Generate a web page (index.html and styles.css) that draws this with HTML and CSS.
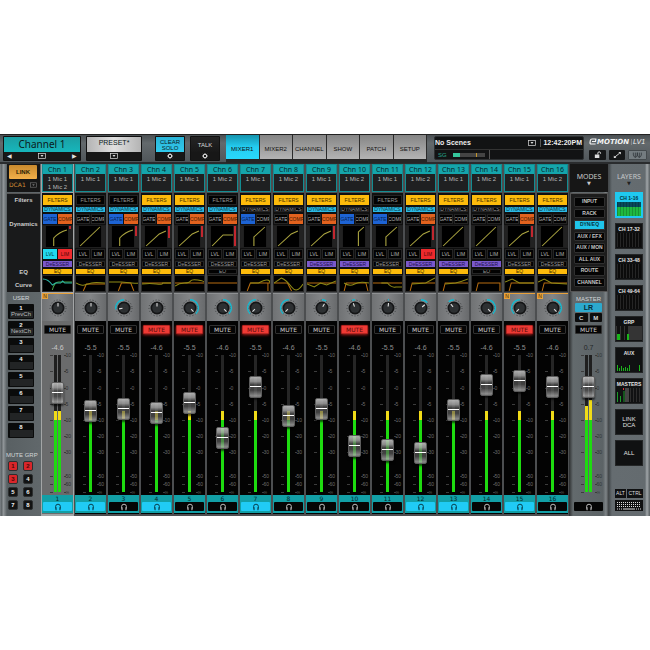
FILE: index.html
```html
<!DOCTYPE html>
<html lang="en">
<head>
<meta charset="utf-8">
<title>eMotion LV1 – Mixer</title>
<link rel="stylesheet" href="styles.css">
</head>
<body>
<svg class="defs" aria-hidden="true">
  <symbol id="i-phones" viewBox="0 0 10 8"><path d="M2.6 4.6V3.6a2.4 2.4 0 0 1 4.8 0v1" fill="none" stroke="currentColor" stroke-width="1"/><path d="M2 4.2h1.6v3H2.6zM6.4 4.2H8l-.6 3h-1z" fill="currentColor"/></symbol>
  <symbol id="i-gear" viewBox="0 0 8 8"><circle cx="4" cy="4" r="1.7" fill="none" stroke="currentColor" stroke-width="1"/><path d="M4 1V2M4 6V7M1 4H2M6 4H7M1.9 1.9l.7.7M5.4 5.4l.7.7M6.1 1.9l-.7.7M2.6 5.4l-.7.7" stroke="currentColor" stroke-width=".8"/></symbol>
  <symbol id="i-drop" viewBox="0 0 8 6"><rect x=".5" y=".5" width="7" height="5" fill="none" stroke="currentColor" stroke-width=".7"/><path d="M2.5 2h3L4 4z" fill="currentColor"/></symbol>
</svg>
<main class="console">
  <header class="top">
    <div class="picker picker-channel">
      <button class="face">Channel 1</button>
      <div class="under"><button aria-label="Previous channel">◀</button><button aria-label="Choose channel"><svg class="drop"><use href="#i-drop"/></svg></button><button aria-label="Next channel">▶</button></div>
    </div>
    <div class="picker picker-preset">
      <button class="face">PRESET*</button>
      <div class="under under-mid"><button aria-label="Choose preset"><svg class="drop"><use href="#i-drop"/></svg></button></div>
    </div>
    <div class="picker picker-small picker-solo">
      <button class="face">CLEAR<br>SOLO</button>
      <div class="under under-mid"><button aria-label="Solo settings"><svg class="gear"><use href="#i-gear"/></svg></button></div>
    </div>
    <div class="picker picker-small picker-talk">
      <button class="face">TALK</button>
      <div class="under under-mid"><button aria-label="Talk settings"><svg class="gear"><use href="#i-gear"/></svg></button></div>
    </div>
    <nav class="tabs">
      <button class="on">MIXER1</button><button>MIXER2</button><button>CHANNEL</button><button>SHOW</button><button>PATCH</button><button>SETUP</button>
    </nav>
    <section class="scenes">
      <div class="scene-row">
        <select aria-label="Scene"><option>No Scenes</option></select>
        <svg class="drop"><use href="#i-drop"/></svg>
        <time>12:42:20PM</time>
      </div>
      <div class="load-row"><span>SG</span><div class="load"><i></i><b></b></div><div class="load-rest"></div></div>
    </section>
    <section class="brand">
      <div class="logo"><svg viewBox="0 0 8 7"><path d="M7.4 1H3Q1.6 1 1.3 2.6L1 4.6Q.8 6 2.2 6H6.6M3 3.5H6.5L6.9 1" fill="none" stroke="#f2f2f2" stroke-width="1.2"/></svg><b>MOTION</b><span>LV1</span></div>
      <div class="tools">
        <button aria-label="Lock"><svg viewBox="0 0 16 10"><path d="M5.5 4.5h4.5v3.5H5.5z" fill="#ddd"/><path d="M8.5 4.5V3.2a1.3 1.3 0 0 1 2.7 0v.6" fill="none" stroke="#ddd"/></svg></button>
        <button aria-label="Resize"><svg viewBox="0 0 16 10"><path d="M5.5 7l5-4" stroke="#ccc"/><path d="M4.500 5.500v2.500h2.500zM11.500 4.500V2h-2.500z" fill="#ddd"/></svg></button>
        <button class="wave" aria-label="Waves"><svg viewBox="0 0 18 10"><path d="M4 2v3q1 3 2.500 3t2.500-3v-3v3q1 3 2.500 3t2.500-3v-3M6.500 2v6M11.500 2v6" fill="none" stroke="#30363a" stroke-width="1"/></svg></button>
      </div>
    </section>
  </header>
  <div class="desk">
    <aside class="left">
      <div class="link">
        <button>LINK</button>
        <div class="dca"><select aria-label="DCA"><option>DCA1</option></select><svg class="drop"><use href="#i-drop"/></svg></div>
      </div>
      <div class="labels"><span class="l-filters">Filters</span><span class="l-dyn">Dynamics</span><span class="l-eq">EQ</span><span class="l-curve">Curve</span></div>
      <div class="user">
        <h2>USER</h2>
        <button>1<span>PrevCh</span></button><button>2<span>NextCh</span></button><button>3<span></span></button><button>4<span></span></button><button>5<span></span></button><button>6<span></span></button><button>7<span></span></button><button>8<span></span></button>
      </div>
      <div class="groups">
        <h2>MUTE GRP</h2>
        <div><button class="on">1</button><button class="on">2</button><button class="on">3</button><button>4</button><button>5</button><button>6</button><button>7</button><button>8</button></div>
      </div>
    </aside>
    <div class="channels" id="channels"></div>
    <section class="master">
      <button class="modes-head">MODES<small>▼</small></button>
      <div class="modes">
        <button>INPUT</button><button>RACK</button><button class="on">DYN/EQ</button><button>AUX / EFX</button><button>AUX / MON</button><button>ALL AUX</button><button>ROUTE</button><button>CHANNEL</button>
      </div>
      <div class="master-head">
        <h2>MASTER</h2>
        <button class="lr">LR</button>
        <div><button>C</button><button>M</button></div>
      </div>
      <div id="master"></div>
    </section>
    <aside class="layers">
      <button class="layers-head">LAYERS<small>▼</small></button>
      <button class="layer on">CH 1-16<i class="bank"></i></button>
      <button class="layer">CH 17-32<i class="bank"></i></button>
      <button class="layer">CH 33-48<i class="bank"></i></button>
      <button class="layer">CH 49-64<i class="bank"></i></button>
      <button class="layer">GRP<svg viewBox="0 0 26 14"><path d="M0 0h26v14H0z" fill="#343434"/><path d="M1 0h3v14H1zM5 0h3v14H5zM9 0h3v14H9z" fill="#111"/><path d="M1 8h3v6H1zM11 8h2v6h-2z" fill="#1bb51b"/></svg></button>
      <button class="layer">AUX<svg viewBox="0 0 26 14"><path d="M1.500 8v6M3.500 11v3M5.500 9v5M7.500 11v3M9.500 10v4M11.500 11v3M13.500 8v6M23.500 8v6" stroke="#1bb51b"/></svg></button>
      <button class="layer">MASTERS<svg viewBox="0 0 26 14"><path d="M9 0h4v14h-4z" fill="#444"/><path d="M14.500 0v14M17.500 0v14M20.500 0v14M23.500 0v14" stroke="#2c2c2c"/><path d="M1.500 4v10M4.500 8v6M8 3v11" stroke="#1b9b2b"/><path d="M7.500 0v2" stroke="#d33"/></svg></button>
      <button class="layer plain">LINK<br>DCA</button>
      <button class="layer plain">ALL</button>
      <div class="keys">
        <button>ALT</button><button>CTRL</button>
        <button class="board" aria-label="Keyboard"><svg viewBox="0 0 26 10"><path d="M1 1.500h24M1 3.500h24M1 5.500h24" stroke="#ddd" stroke-dasharray="1 1"/><path d="M1 8h5M20 8h5" stroke="#ddd" stroke-dasharray="1 1"/><path d="M7 8h12" stroke="#ddd"/></svg></button>
      </div>
    </aside>
  </div>
</main>
<script src="app.js"></script>
</body>
</html>
```
FILE: styles.css
```css
* { box-sizing: border-box; }
body { margin: 0; min-height: 100vh; display: flex; align-items: center; background: #fff; color: #ddd; font: 6px/8px "Liberation Sans", Arial, sans-serif; }
button, select, input { margin: 0; padding: 0; border: 0; font: inherit; color: inherit; background: none; }
h2 { margin: 0; font-weight: normal; font-size: 6px; line-height: 8px; }
svg { display: block; }
.defs { position: absolute; width: 0; height: 0; }
.drop { width: 8px; height: 6px; }
.gear { width: 8px; height: 8px; }

.console { flex: 1; background: #555b5e; border-top: 1px solid #222; }

/* Top bar */
.top { display: flex; height: 29px; padding: 0 3px; background: linear-gradient(#4a4f52, #63696c 30%, #50565a); border-bottom: 2px solid #2a2c2e; }
.picker { display: flex; flex-direction: column; height: 25px; margin: 1px 5px 0 0; padding: 1px; background: #111; border-radius: 1px; }
.picker .face { height: 15px; color: #0b1a1c; }
.picker-channel { width: 78px; }
.picker-channel .face { background: linear-gradient(#1b9fa3, #17b6bb); font: 10px/13px "Noto Sans", sans-serif; }
.picker-preset { width: 56px; margin-right: 13px; }
.picker-preset .face { padding-bottom: 3px; background: linear-gradient(90deg, #b4b4b4, #e0e0e0 50%, #b4b4b4); font: 7px/10px "Liberation Sans", sans-serif; }
.picker-small { width: 30px; }
.picker-solo .face { background: linear-gradient(#2ab4d8, #31cbee); font-size: 6px; line-height: 6px; }
.picker-talk { margin-right: 6px; }
.picker-talk .face { color: #ddd; background: linear-gradient(#242424, #181818); }
.under { display: flex; align-items: center; justify-content: space-between; height: 8px; padding: 0 3px; background: #171717; color: #ddd; }
.under-mid { justify-content: center; }
.under button { line-height: 8px; }
.tabs { display: flex; width: 201px; height: 28px; background: #262626; padding-bottom: 4px; margin-right: 7px; }
.tabs button { flex: 1; padding-top: 4px; color: #111; background: linear-gradient(#858585, #b4b4b4); border-right: 1px solid #2b2b2b; }
.tabs .on { background: linear-gradient(#1493ad, #24cdf1 50%, #2ad8fb); }
.scenes { flex: 1; height: 24px; margin-top: 1px; background: #121314; border: 1px solid #2d3032; border-radius: 2px; }
.scene-row { display: flex; align-items: center; height: 13px; border-bottom: 1px solid #333; }
.scene-row select { flex: 1; appearance: none; font-size: 7px; line-height: 10px; font-weight: bold; color: #eee; }
.scene-row time { margin-left: 4px; padding: 0 1px 0 2px; border-left: 1px solid #555; font-size: 7px; line-height: 8px; font-weight: bold; color: #eee; }
.load-row { display: flex; align-items: center; height: 9px; padding-left: 3px; color: #27a58c; }
.load { display: flex; justify-content: space-between; width: 32px; height: 4px; margin: 0 4px 0 6px; padding-right: 8px; background: #444; }
.load i { width: 7px; background: #35c79c; }
.load b { width: 1px; background: #c4962c; }
.load-rest { border-left: 1px solid #555; height: 9px; }
.brand { width: 58px; margin: 2px 0 0 5px; }
.logo { display: flex; align-items: center; height: 9px; color: #f2f2f2; }
.logo svg { flex: none; width: 8px; height: 7px; }
.logo b { font: italic bold 7px/8px "DejaVu Sans", sans-serif; }
.logo span { margin-left: 2px; padding-left: 1px; border-left: 1px solid #888; font-size: 7px; font-style: italic; line-height: 6px; }
.tools { display: flex; gap: 3px; margin-top: 4px; }
.tools button { flex: 1; height: 10px; background: #151617; border-radius: 1px; }
.tools .wave { background: #747c80; border: 1px solid #444a4d; }
.tools svg { width: 100%; height: 10px; }
.tools .wave svg { height: 8px; }

/* Columns */
.desk { display: grid; grid-template-columns: 41px 1fr 40px 41px; height: 352px; }

/* Left side */
.left { display: flex; flex-direction: column; padding-left: 7px; background: linear-gradient(90deg, #7c8286, #5b6164 2px, #969b9e 3px, #596063 7px, #61686b); }
.link { height: 28px; margin-right: 1px; padding: 1px; background: #161616; }
.link > button { display: block; width: 28px; height: 14px; margin-left: 1px; background: linear-gradient(#c98a2e, #f2b04a); color: #291c05; font-weight: bold; border-radius: 1px; }
.dca { display: flex; align-items: center; height: 11px; padding: 0 2px 0 1px; color: #d08d35; }
.dca select { flex: 1; min-width: 0; appearance: none; font: 6px/8px "DejaVu Sans", sans-serif; }
.dca .drop { width: 7px; color: #777; }
.labels { display: grid; grid-template-rows: 12px 58px 12px 12px; align-content: start; height: 99px; margin: 1px 1px 1px 0; padding-top: 2px; background: #191a1b; color: #ccc; text-align: center; border-top: 1px solid #555; font-weight: bold; }
.labels .l-filters { line-height: 9px; }
.labels .l-dyn { padding-top: 12px; }
.labels .l-eq { padding-top: 2px; }
.labels .l-curve { padding-top: 3px; }
.user { display: grid; gap: 2px; width: 27px; padding: 2px 0 0 1px; text-align: center; }
.user button { display: flex; flex-direction: column; align-items: center; height: 15px; padding: 1px; background: #0a0b0b; color: #eee; font-weight: bold; line-height: 6px; border-radius: 1px; }
.user span { width: 23px; height: 7px; background: #222425; color: #bbb; font-weight: normal; line-height: 7px; }
.user h2, .groups h2 { color: #d2d6d8; }
.user h2 { line-height: 7px; }
.groups { width: 40px; margin-top: 13px; }
.groups h2 { margin-left: -1px; font-size: 6px; white-space: nowrap; }
.groups div { display: grid; grid-template-columns: 10px 10px; gap: 3px 5px; margin: 2px 0 0 1px; }
.groups button { height: 10px; background: #121313; color: #eee; border: 1px solid #2c2f30; border-radius: 2px; font-weight: bold; line-height: 8px; }
.groups .on { background: #d8262a; color: #4d0606; }

/* Channel columns */
.channels { display: flex; }
.channel { flex: 1; min-width: 0; display: flex; flex-direction: column; padding: 0 1px; background: #4c4e50; }
.ident { height: 28px; background: #1f2021; border: 1px solid #128d92; color: #b9b9b9; text-align: center; line-height: 8px; }
.ident h3 { margin: 0 0 1px; background: #15a5ab; color: #06282b; font: 7px/9px "Noto Sans", sans-serif; }
.channel:first-child { background: #a3a5a6; }
.dyn { display: grid; grid-template-rows: 10px 5px 10px 21px 10px 6px 5px 15px; row-gap: 2px; height: 98px; margin: 1px 0 2px; padding: 2px 1px 0; background: #101010; align-content: start; }
.dyn button { background: #020202; color: #9a9a9a; outline: 1px solid #242424; outline-offset: -1px; line-height: 5px; font-size: 5px; overflow: hidden; white-space: nowrap; }
.dyn .pair { display: grid; grid-template-columns: 1fr 1fr; gap: 1px; }
.dyn .pair button { color: #b4b4b4; }
.dyn .filters.on, .dyn .eq.on { background: #fdbb0b; color: #3c2b00; outline: 0; }
.dyn .dynamics.on { background: #2bb9e4; color: #06333f; outline: 0; }
.dyn .gate.on { background: #1d63d4; color: #071f4c; outline: 0; }
.dyn .comp.on { background: #e2621e; color: #441700; outline: 0; }
.dyn .lvl.on { background: #22d9ee; color: #063c42; outline: 0; }
.dyn .lim.on { background: #ee2a2d; color: #4d0606; outline: 0; }
.dyn .deesser.on { background: #7a59cc; color: #20104c; outline: 0; }
.transfer { display: grid; grid-template-columns: 2px 1fr 3px; gap: 1px; }
.transfer > * { background: #000; outline: 1px solid #1f1f1f; }
.transfer > span { background: #222; }
.transfer svg, .response { width: 100%; height: 100%; min-height: 0; }
.gr { display: block; width: 2px; background: #c2272f; }
.response { background: #000; outline: 1px solid #292929; }
.response path, .transfer path { fill: none; stroke-width: 1; }

/* Fader strips */
.strip { flex: 1; display: flex; flex-direction: column; align-items: stretch; background: #030303; }
.knob { height: 28px; display: grid; place-items: center; background: linear-gradient(90deg, #707274, #838587 50%, #686a6c); border-top: 1px solid #8f9193; }
.knob svg { width: 20px; height: 20px; }
.flag { position: absolute; width: 6px; height: 6px; background: #e8a13b; color: #3c2400; font-size: 5px; line-height: 6px; text-align: center; }
.flagged .knob { border-top-color: #e8a13b; }
.mute { height: 9px; margin: 4px 2px 9px; background: #050505; color: #d3d3d3; border: 1px solid #303030; border-radius: 1px; font: 6px/7px "DejaVu Sans", sans-serif; }
.mute.on { background: #ee3a35; color: #540c0a; border-color: #b52521; box-shadow: 0 1px 3px #a31d1b; }
.level { height: 10px; color: #8e8e8e; text-align: center; font-size: 7px; line-height: 9px; }
.fader { display: grid; height: 142px; grid-template: 142px / 1fr; }
.fader > * { grid-area: 1 / 1; }
.scale { display: grid; grid-template-rows: 16px 17px 16px 16px 16px 16px 24px 8px 8px 7px; margin: -2px 0 0; padding: 0; list-style: none; font-size: 5px; line-height: 8px; color: #6c6c6c; }
.scale li { display: grid; grid-template-columns: 3px 11px 2px 1fr; align-items: center; height: 8px; padding-left: calc(50% - 8px); white-space: nowrap; }
.scale li::before, .scale li::after { content: ""; grid-row: 1; height: 1px; background: #3c3c3c; }
.scale li::after { grid-column: 3; }
.scale li span { grid-column: 4; grid-row: 1; }
.meter { display: flex; gap: 1px; justify-self: center; align-self: start; height: 137px; margin-top: 2px; background: #262626; }
.meter i { display: flex; flex-direction: column; justify-content: flex-end; width: 3px; height: 137px; }
.meter i::before { content: ""; flex: 0 0 var(--peak, 9px); background: #f0dc18; }
.meter i::after { content: ""; flex: 0 0 72px; background: #1edb10; }
.wide .meter { background: transparent; }
.wide .meter i { background: #1f1f1f; }
.fader input { appearance: none; writing-mode: vertical-lr; direction: rtl; justify-self: center; align-self: start; width: 13px; height: 137px; margin-top: 2px; background: transparent; }
.fader input::-webkit-slider-runnable-track { width: 13px; height: 100%; background: transparent; }
.fader input::-webkit-slider-thumb { appearance: none; width: 13px; height: 22px; border-radius: 2px; background: linear-gradient(transparent 10px, #fff 10px, #fff 11px, transparent 11px), linear-gradient(#d0d0d0dd, #a2a2a2d8 25%, #5a5a5ab0 40%, #606060a8 65%, #a8a8a8cc 90%, #777d); border: 1px solid #5c5c5c; background-origin: border-box; box-shadow: 0 2px 2px #0009; }
.foot { height: 18px; padding: 0 1px 2px; background: #129fa6; color: #05282b; text-align: center; display: flex; flex-direction: column; font: 6px/7px "DejaVu Sans", sans-serif; }
.foot button { height: 9px; display: grid; place-items: center; background: #050505; color: #bbb; border-radius: 1px; }
.foot button svg { width: 10px; height: 8px; }
.foot .on { background: #20cbf5; color: #08404e; }
.channel:first-child .strip { background: #6a6b6c; }
.channel:first-child .level { color: #c9c9c9; }
.channel:first-child .scale { color: #2d2d2d; }
.channel > .strip { margin-bottom: 2px; }

/* Master */
.master { display: flex; flex-direction: column; padding: 0 1px; background: linear-gradient(90deg, #2c2e2f, #636a6d 4px, #5c6366 34px, #7e8487 37px, #3a3d3f); }
.modes-head { height: 28px; padding-top: 2px; background: #161616; color: #c9c9c9; font: 7px/8px "Noto Sans", sans-serif; }
.modes-head small, .layers-head small { display: block; font: 5px/5px "DejaVu Sans", sans-serif; }
.modes { display: grid; grid-auto-rows: 1fr; gap: 2px; height: 99px; margin: 1px 0 1px; padding: 3px 2px 4px 3px; background: #1c1c1c; border: 1px solid #555; }
.modes button { background: #040404; color: #c6c6c6; border: 1px solid #2f2f2f; border-radius: 1px; font-weight: bold; font-size: 5px; line-height: 7px; white-space: nowrap; }
.modes .on { background: #1fc4ea; color: #053743; }
.master-head { height: 30px; padding: 2px 6px 0 5px; text-align: center; color: #d2d6d8; }
.master-head button { background: #0d0d0d; line-height: 8px; font-weight: bold; height: 9px; border-radius: 1px; }
.master-head .lr { display: block; width: 100%; height: 9px; background: #2da9cd; color: #052c38; font-weight: bold; font-size: 7px; }
.master-head div { display: grid; grid-template-columns: 1fr 1fr; gap: 2px; margin-top: 1px; }
.master .strip { background: transparent; padding: 0 4px 0 3px; }
.master .mute { margin-top: 2px; }
.master .level { color: #232627; }
.master .scale { color: #303536; }
.master .foot { background: transparent; padding-top: 7px; }

/* Layers */
.layers { display: flex; flex-direction: column; padding: 0 7px 0 6px; background: linear-gradient(90deg, #444a4d, #656c70 3px, #646b6f 36px, #a1a6a9 38px, #565c5f); }
.layers-head { height: 28px; padding-top: 2px; margin: 0 -4px; color: #c4c8ca; font: 7px/8px "Noto Sans", sans-serif; }
.layers-head small { color: #222; }
.layer { display: flex; flex-direction: column; align-items: center; height: 26px; margin-bottom: 5px; padding: 1px 0; background: #101112; color: #e2e2e2; border: 1px solid #242627; font-weight: bold; font-size: 5px; line-height: 8px; white-space: nowrap; }
.layer svg { flex: none; width: 26px; height: 14px; }
.layer.plain { justify-content: center; line-height: 6px; font-size: 6px; font-weight: normal; }
.bank { width: 24px; height: 14px; background: repeating-linear-gradient(90deg, #252525 0 1px, #0b0b0b 1px 3px); }
.layer.on { background: #1fc9f0; color: #06333f; border-color: #1fc9f0; }
.layer.on .bank { background: repeating-linear-gradient(90deg, #0003 0 1px, transparent 1px 3px), linear-gradient(#08485a 5px, #1fb840 5px); }
.keys { display: grid; grid-template-columns: 11px 1fr; gap: 2px 1px; margin-top: 18px; }
.keys button { height: 9px; background: #101112; color: #ddd; font-size: 5px; line-height: 9px; }
.keys .board { grid-column: 1 / 3; height: 11px; }
.board svg { width: 100%; height: 10px; }
```
FILE: app.js
```js
// Transfer curves, in a 20 x 20 box
const transfer = {
  line: "M1 20L19 1",
  soft: "M1 20L13 8L19 5",
  flat: "M1 20L11 9H20",
  gateComp: "M7 20V12Q12 6 19 4",
  gate: "M9 20V11L19 1",
  gateHigh: "M14 20V6L19 1"
};

// mic, lit sections, curve, gain reduction, EQ response (amber, then olive), pan, level, fader height, headphones
const channels = [
  { mic: ["1 Mic 1", "1 Mic 2"], lit: "filters dynamics gate comp lvl lim deesser eq", curve: "gateComp", gr: 3, amber: "", olive: "M9 14Q11 6 15 6H28", teal: "M0 3Q5 3 9 9L12 7H17L19 5L21 7H28", pan: 0, fader: 88, phones: 1, flag: 1 },
  { mic: ["1 Mic 1"], lit: "dynamics eq", curve: "line", gr: 0, amber: "M7 15L10 8H28", olive: "M0 7Q4 10 8 9T15 7T28 7", pan: 0, fader: 70, phones: 1 },
  { mic: ["1 Mic 1"], lit: "dynamics gate comp eq", curve: "gateComp", gr: 10, amber: "M9 15L12 7H21L24 15", olive: "M0 6H12T22 7T28 6", pan: -100, fader: 72 },
  { mic: ["1 Mic 2"], lit: "filters dynamics comp eq", curve: "soft", gr: 12, amber: "M0 7H28", olive: "M0 8Q8 7 14 8T20 7H28", pan: 0, fader: 68, mute: 1, phones: 1 },
  { mic: ["1 Mic 1"], lit: "filters dynamics comp eq", curve: "soft", gr: 11, amber: "M0 7H28", olive: "M0 10Q4 7 9 7T15 5T22 4T28 6", pan: 135, fader: 78, mute: 1 },
  { mic: ["1 Mic 2"], lit: "dynamics comp", curve: "flat", gr: 20, amber: "M0 7H28", olive: "", pan: 135, fader: 43 },
  { mic: ["1 Mic 1"], lit: "filters gate eq", curve: "gate", gr: 0, amber: "M6 15L9 7H28M26 7V15", olive: "M9 7H17Q22 4 25 4T28 7", pan: -135, fader: 94, mute: 1, phones: 1 },
  { mic: ["1 Mic 2"], lit: "filters comp eq", curve: "soft", gr: 0, amber: "M0 7H13L17 15", olive: "M0 7L7 2Q12 4 17 11T28 8", pan: -135, fader: 65 },
  { mic: ["1 Mic 1"], lit: "filters dynamics comp deesser eq", curve: "soft", gr: 13, amber: "M0 7H28", olive: "M0 8L7 11L13 7L19 9L28 5", pan: 30, fader: 72 },
  { mic: ["1 Mic 2"], lit: "filters gate deesser eq", curve: "gateHigh", gr: 0, amber: "M4 15L6 7H25L27 15", olive: "M4 7Q9 11 14 8T28 7", pan: -20, fader: 35, mute: 1 },
  { mic: ["1 Mic 1"], lit: "dynamics gate eq", curve: "gate", gr: 0, amber: "M0 7H28", olive: "M8 7H14Q18 12 22 11H28", pan: 6, fader: 31 },
  { mic: ["1 Mic 2"], lit: "filters dynamics comp lim deesser eq", curve: "soft", gr: 14, amber: "M4 15L6 7H28", olive: "M6 8L19 7L28 2", pan: 50, fader: 28, phones: 1 },
  { mic: ["1 Mic 1"], lit: "filters deesser eq", curve: "line", gr: 0, amber: "M4 15L6 7H28", olive: "M6 8L16 7Q21 6 28 3", pan: -40, fader: 71, phones: 1 },
  { mic: ["1 Mic 2"], lit: "filters deesser", curve: "line", gr: 0, amber: "M4 15L6 7H27V15", olive: "", pan: 135, fader: 96 },
  { mic: ["1 Mic 1"], lit: "filters dynamics comp eq", curve: "soft", gr: 11, amber: "M4 15L6 7H28", olive: "M0 6L7 3L14 7H24L28 7", pan: -135, fader: 100, mute: 1, phones: 1, flag: 1 },
  { mic: ["1 Mic 2"], lit: "filters dynamics eq", curve: "line", gr: 0, amber: "M4 15L6 7H28", olive: "M0 6L6 3L13 7L28 8", pan: 135, fader: 94, flag: 1 }
];

const dynButton = (lit, name, text) =>
  `<button class="${name}${lit.includes(name) ? " on" : ""}">${text}</button>`;

function knob(angle) {
  const rad = (a) => (a - 90) * Math.PI / 180;
  const at = (a, r) => `${(10 + r * Math.cos(rad(a))).toFixed(2)} ${(10 + r * Math.sin(rad(a))).toFixed(2)}`;
  const arc = angle ? `<path d="M${at(0, 8.3)}A8.3 8.3 0 0 ${angle > 0 ? 1 : 0} ${at(angle, 8.3)}" fill="none" stroke="#17b9cf" stroke-width="1.4"/>` : "";
  return `<button class="knob" aria-label="Pan"><svg viewBox="0 0 20 20">
    <circle cx="10" cy="10" r="8" fill="none" stroke="#3b3e40" stroke-width="1" stroke-dasharray="1 2"/>${arc}
    <circle cx="10" cy="10" r="6.5" fill="#141516"/><circle cx="10" cy="10" r="4.8" fill="#2d3032"/>
    <path d="M${at(angle, 1.5)}L${at(angle, 5)}" stroke="#ddd" stroke-width="1.1"/></svg></button>`;
}

const marks = ["10", "5", "0", "5", "10", "20", "30", "50", "60", "∞"];

function faderBlock(name, value, peaks) {
  return `<div class="fader${peaks.length > 1 ? " wide" : ""}">
    <ul class="scale">${marks.map((m) => `<li><span>${m}</span></li>`).join("")}</ul>
    <div class="meter">${peaks.map((p) => `<i style="--peak:${p}px"></i>`).join("")}</div>
    <input type="range" min="0" max="115" value="${value}" aria-label="${name} fader"></div>`;
}

const phones = '<svg><use href="#i-phones"/></svg>';

document.getElementById("channels").innerHTML = channels.map((c, i) => {
  const n = i + 1;
  const lit = c.lit.split(" ");
  const b = (name, text) => dynButton(lit, name, text);
  return `<article class="channel${c.flag ? " flagged" : ""}">
    <div class="ident"><h3>Chn ${n}</h3>${c.mic.join("<br>")}</div>
    <div class="dyn">
      ${b("filters", "FILTERS")}${b("dynamics", "DYNAMICS")}
      <div class="pair">${b("gate", "GATE")}${b("comp", "COMP")}</div>
      <div class="transfer"><span></span><svg viewBox="0 0 20 21" preserveAspectRatio="none"><path d="${transfer[c.curve]}" stroke="#aaa440"/></svg><span><i class="gr" style="height:${c.gr}px"></i></span></div>
      <div class="pair">${b("lvl", "LVL")}${b("lim", "LIM")}</div>
      ${b("deesser", "DeESSER")}${b("eq", "EQ")}
      <svg class="response" viewBox="0 0 28 15" preserveAspectRatio="none"><path d="${c.amber}" stroke="#b86d10"/><path d="${c.olive}" stroke="${c.teal ? "#4aa545" : "#8f8b16"}"/><path d="${c.teal || ""}" stroke="#2ab3a4"/></svg>
    </div>
    <div class="strip">
      ${c.flag ? '<span class="flag">N</span>' : ""}${knob(c.pan)}
      <button class="mute${c.mute ? " on" : ""}">MUTE</button>
      <div class="level">${n === 1 || (n > 3 && n % 2 === 0) ? "-4.6" : "-5.5"}</div>
      ${faderBlock("Channel " + n, c.fader, n === 1 ? [9, 9] : [9])}
      <div class="foot">${n}<button class="${c.phones ? "on" : ""}" aria-label="Cue ${n}">${phones}</button></div>
    </div></article>`;
}).join("");

document.getElementById("master").innerHTML = `<div class="strip">
  <button class="mute">MUTE</button><div class="level">0.7</div>
  ${faderBlock("Master", 94, [14, 20])}
  <div class="foot"><button aria-label="Cue master">${phones}</button></div></div>`;
```
